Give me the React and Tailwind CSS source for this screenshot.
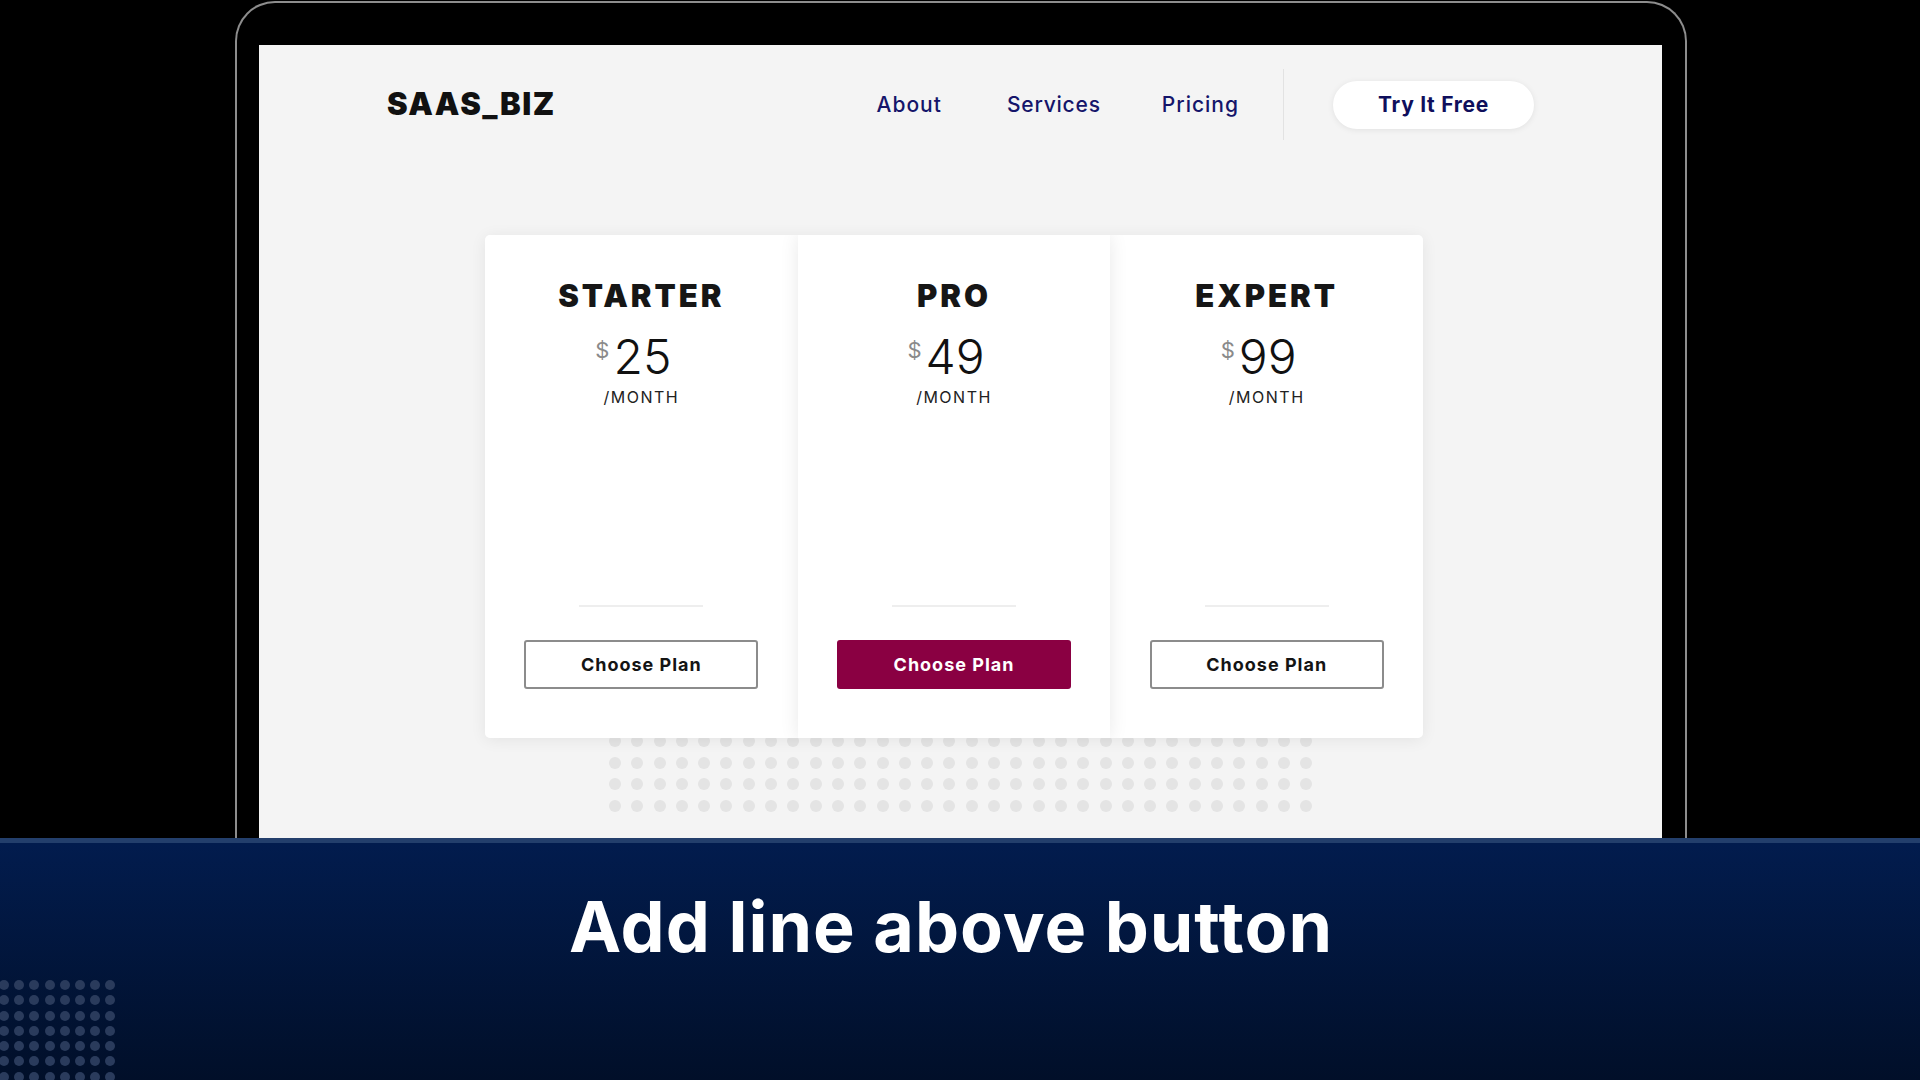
import React from "react";

const plans = [
    { name: "STARTER", price: "25", featured: false },
    { name: "PRO", price: "49", featured: true },
    { name: "EXPERT", price: "99", featured: false },
];

const gridDots = Array.from({ length: 128 });
const bannerDots = Array.from({ length: 56 });

function PlanCard({ plan }) {
    return (
        <div
            className={`relative flex h-[503px] flex-1 flex-col items-center bg-white ${
                plan.featured
                    ? "z-20 shadow-[0_0_18px_rgba(0,0,0,0.09)]"
                    : "z-10"
            }`}
        >
            <h3 className="mt-[44px] text-[31px] font-black leading-[34px] tracking-[3px] text-[#161616]">
                {plan.name}
            </h3>
            <div className="mt-[20px] mr-[16px] flex items-start">
                <span className="mt-[5px] mr-[4px] text-[22px] leading-[24px] font-normal text-[#8a8a8a]">
                    $
                </span>
                <span className="text-[48px] font-light leading-[48px] text-[#111]">
                    {plan.price}
                </span>
            </div>
            <p className="mt-[6px] text-[16px] leading-[20px] tracking-[1.5px] text-[#222]">
                /MONTH
            </p>
            <div className="mt-auto mb-[33px] h-[2px] w-[124px] bg-[#eeeeee]" />
            <button
                className={`mb-[49px] h-[49px] w-[234px] rounded-[3px] text-[18px] font-bold tracking-[1px] ${
                    plan.featured
                        ? "bg-[#8a0042] text-white"
                        : "border-2 border-[#8c8c8c] bg-white text-[#141414]"
                }`}
            >
                Choose Plan
            </button>
        </div>
    );
}

export default function App() {
    return (
        <div className="relative flex h-[1080px] w-[1920px] flex-col overflow-hidden bg-black font-['Inter','Liberation_Sans',sans-serif]">
            {/* laptop */}
            <div className="h-[838px] overflow-hidden pt-[1px]">
                <div className="ml-[235px] h-[900px] w-[1452px] rounded-t-[40px] border-2 border-b-0 border-[#8d8d8d] bg-black pt-[42px] pl-[22px]">
                    <div className="h-[860px] w-[1403px] bg-[#f4f4f4]">
                        {/* nav */}
                        <div className="box-content flex h-[71px] items-center justify-between px-[128px] pt-[24px]">
                            <span className="text-[31px] font-black tracking-[1.5px] text-[#111]">
                                SAAS_BIZ
                            </span>
                            <div className="flex h-[71px] items-center">
                                <a className="text-[21px] font-medium tracking-[1px] text-[#15156a]">
                                    About
                                </a>
                                <a className="ml-[65px] text-[21px] font-medium tracking-[0.8px] text-[#15156a]">
                                    Services
                                </a>
                                <a className="ml-[61px] text-[21px] font-medium tracking-[1px] text-[#15156a]">
                                    Pricing
                                </a>
                                <div className="ml-[44px] h-[71px] w-px bg-[#e2e2e2]" />
                                <button className="ml-[49px] h-[48px] w-[201px] rounded-full bg-white text-[21px] font-bold tracking-[0.7px] text-[#0f0f5c] shadow-[0_1px_6px_rgba(0,0,0,0.08)]">
                                    Try It Free
                                </button>
                            </div>
                        </div>

                        {/* pricing cards */}
                        <div className="relative z-10 ml-[226px] mt-[95px] flex w-[938px] overflow-hidden rounded-[5px] shadow-[0_2px_16px_rgba(0,0,0,0.07)]">
                            {plans.map((plan) => (
                                <PlanCard key={plan.name} plan={plan} />
                            ))}
                        </div>

                        {/* dotted pattern */}
                        <div className="relative z-0 mx-auto -mt-[3px] grid w-[703px] grid-cols-[repeat(32,12px)] gap-x-[10.3px] gap-y-[9.7px]">
                            {gridDots.map((_, i) => (
                                <span
                                    key={i}
                                    className="h-[12px] w-[12px] rounded-full bg-[#e4e4e4]"
                                />
                            ))}
                        </div>
                    </div>
                </div>
            </div>

            {/* caption banner */}
            <div className="relative h-[242px] border-t-[5px] border-[#233f6c] bg-linear-to-b from-[#021c4e] to-[#010f29]">
                <h1 className="pt-[42px] pr-[18px] text-center text-[70px] font-bold leading-[84px] tracking-[1px] text-white">
                    Add line above button
                </h1>
                <div className="absolute left-[-1px] top-[137px] grid grid-cols-[repeat(8,10px)] gap-x-[5.2px] gap-y-[5.3px]">
                    {bannerDots.map((_, i) => (
                        <span
                            key={i}
                            className="h-[10px] w-[10px] rounded-full bg-[#2a3b5c]"
                        />
                    ))}
                </div>
            </div>
        </div>
    );
}
